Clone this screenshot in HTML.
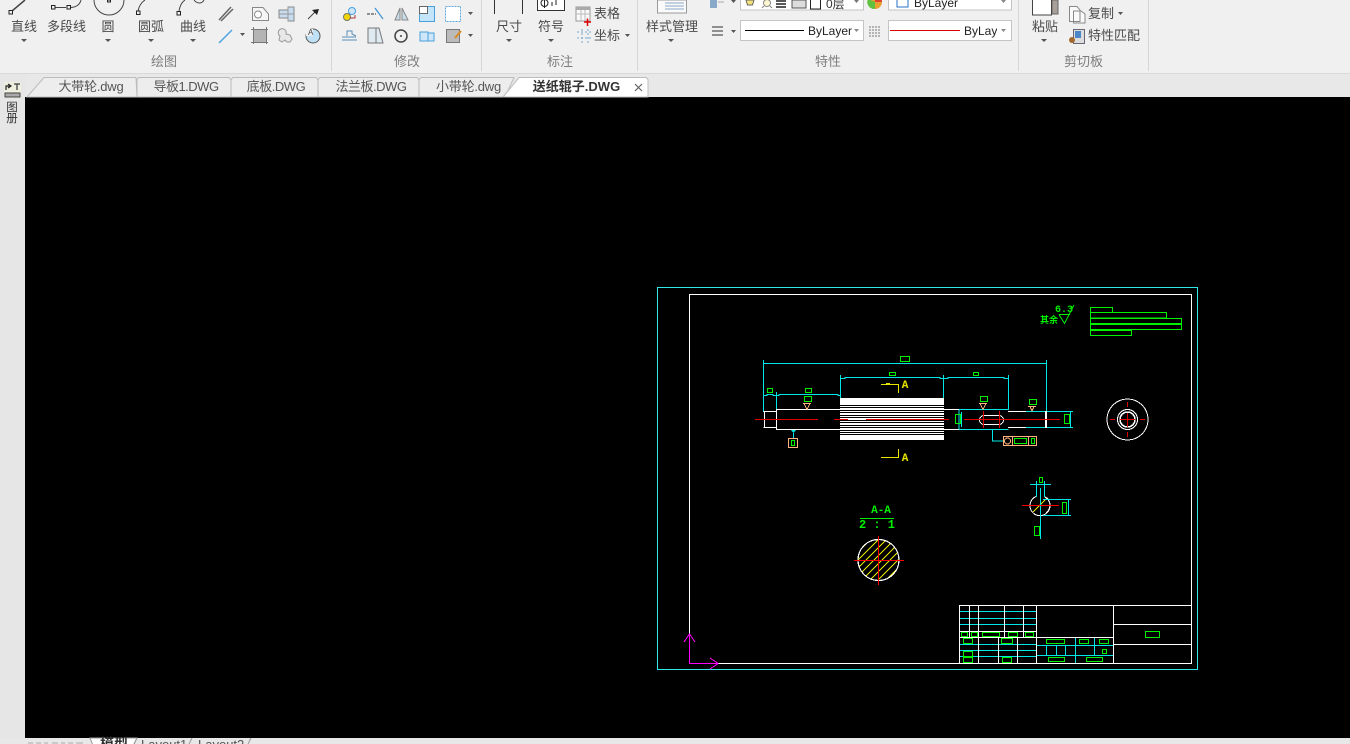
<!DOCTYPE html>
<html><head><meta charset="utf-8"><style>
html,body{margin:0;padding:0;background:#000;width:1350px;height:744px;overflow:hidden}
svg{display:block;position:absolute;left:0;top:0}
.t{font-family:"Liberation Sans","Noto Sans CJK SC",sans-serif;font-size:13px;fill:#4a4a4a}
.g{font-family:"Liberation Sans","Noto Sans CJK SC",sans-serif;font-size:13px;fill:#7d7d7d;text-anchor:middle}
.tab{font-family:"Liberation Sans","Noto Sans CJK SC",sans-serif;font-size:13px;fill:#555;text-anchor:middle}
.nar{letter-spacing:-.5px}
.c{font-family:"Liberation Sans",sans-serif;font-size:12px;fill:#222}
.ar{fill:#555}
.i{fill:none;stroke:#666;stroke-width:1}
.d{fill:none;shape-rendering:crispEdges;stroke-width:1}
.dt{font-family:"Liberation Mono",monospace;font-size:11px;font-weight:bold;text-anchor:middle}
</style></head><body>
<svg width="1350" height="744" viewBox="0 0 1350 744" xmlns="http://www.w3.org/2000/svg">
<!-- backgrounds -->
<rect width="1350" height="744" fill="#000"/>
<rect width="1350" height="74" fill="#f0f0f0"/>
<rect y="73" width="1350" height="1" fill="#d9d9d9"/>
<rect y="74" width="1350" height="23" fill="#e8e8e8"/>
<rect y="74" width="25" height="670" fill="#e6e6e6"/>
<rect y="738" width="1350" height="6" fill="#e8e8e8"/>
<!-- separators -->
<g fill="#d6d6d6"><rect x="331" y="0" width="1" height="71"/><rect x="481" y="0" width="1" height="71"/><rect x="637" y="0" width="1" height="71"/><rect x="1018" y="0" width="1" height="71"/><rect x="1148" y="0" width="1" height="71"/></g>

<!-- draw group big icons -->
<g class="i" fill="none">
<path d="M12 11L25 0" stroke="#444" stroke-width="1.5"/><rect x="9" y="10.5" width="3.5" height="3.5" stroke="#222"/>
<path d="M55 7.5H66M71 7.5C77 7 80 4 81 0" stroke="#444"/><rect x="51.5" y="5.5" width="3.5" height="3.5" stroke="#222"/><rect x="67" y="5.5" width="3.5" height="3.5" stroke="#222"/>
<circle cx="109" cy="0" r="15" stroke="#444"/><rect x="107.5" y="0" width="3" height="2" stroke="#222"/>
<path d="M138 11C139 6 142 2 145 0" stroke="#444"/><rect x="136.5" y="11" width="3.5" height="3.5" stroke="#222"/>
<path d="M179 11C180 5 182 2 185 0M194 0C197 4 202 4 204 0" stroke="#444"/><rect x="177" y="11.5" width="3.5" height="3.5" stroke="#222"/>
</g>
<g class="t">
<text x="11" y="31">直线</text><text x="47" y="31">多段线</text><text x="101.500" y="31">圆</text><text x="138" y="31">圆弧</text><text x="180" y="31">曲线</text>
<text x="496" y="31">尺寸</text><text x="538" y="31">符号</text><text x="594" y="18">表格</text><text x="594" y="40">坐标</text>
<text x="646" y="31">样式管理</text><text x="1032" y="31">粘贴</text><text x="1088" y="18">复制</text><text x="1088" y="40">特性匹配</text>
</g>
<g class="ar">
<path d="M21 39h6l-3 3zM105 39h6l-3 3zM148 39h6l-3 3zM190 39h6l-3 3zM506 39h6l-3 3zM548 39h6l-3 3zM668 39h6l-3 3zM1041 39h6l-3 3z"/>
<path d="M240 33h5l-2.500 3zM468 12h5l-2.500 3zM468 34h5l-2.500 3zM625 34h5l-2.500 3zM731 30h5l-2.500 3zM1118 12h5l-2.500 3zM731 0h5l-2.500 3z"/>
</g>
<g class="g"><text x="164" y="66">绘图</text><text x="407" y="66">修改</text><text x="560" y="66">标注</text><text x="828" y="66">特性</text><text x="1083.500" y="66">剪切板</text></g>

<!-- draw small icons -->
<path d="M219 20L231 7M221 21L233 9" stroke="#666" stroke-width="1.500" fill="none"/>
<path d="M219 43L232 30" stroke="#4da6e0" stroke-width="1.500"/>
<path d="M252.500 7.500H263L268.500 14V20.500H252.500Z" fill="#f5f5f5" stroke="#888"/><circle cx="258" cy="14.500" r="3.500" fill="#fff" stroke="#888"/>
<rect x="253.500" y="29.500" width="13" height="13" fill="#b4b4b4" stroke="#777"/>
<path d="M251 29.500H269M251 42.500H269M253.500 27V45M266.500 27V45" stroke="#777" stroke-dasharray="2 1"/>
<path d="M279 10H288V7H294V21H288V18H279Z" fill="#c8dcf0" stroke="#888"/>
<path d="M288 7V21M279 14H294" stroke="#999"/>
<path d="M280 36a4 4 0 1 1 6 -2l4 1 2 4-2 3-3 0-2 -2-3 2-3-2z" fill="#e8e8e8" stroke="#999"/>
<path d="M308 19L316 11" stroke="#444"/><path d="M312 10L319 9L317 15Z" fill="#222"/>
<circle cx="313" cy="36" r="7" fill="#bfe0f6" stroke="#555"/><path d="M313 36V29H306V36Z" fill="#f0f0f0"/><text x="308" y="35" font-family="Liberation Sans,sans-serif" font-size="8" fill="#444">A</text>
<!-- modify icons -->
<circle cx="347" cy="17" r="3.500" fill="#f0d800" stroke="#776"/><circle cx="352" cy="11" r="3.500" fill="#cfe6f8" stroke="#4aa0dc"/><path d="M350 18h5v-3" stroke="#a33" fill="none"/>
<path d="M367 14H376" stroke="#555" stroke-width="1.200" stroke-dasharray="3 1"/><path d="M375 8L383 19" stroke="#3a90d0" stroke-width="1.200"/>
<path d="M400 8V20H395ZM402 8V20H408Z" fill="#c8dcea" stroke="#888"/>
<rect x="419.500" y="6.500" width="15" height="15" fill="#c4e4fa" stroke="#4aa0dc"/><rect x="419.500" y="6.500" width="8" height="7" fill="#fff" stroke="#666"/>
<rect x="445.500" y="6.500" width="15" height="15" fill="#fff" stroke="#5aa8dc" stroke-dasharray="2 1"/>
<path d="M342 37H356M342 40H357M347 36V31H352L352 34L356 36" fill="none" stroke="#5a8fb8"/>
<path d="M368 28H376V43H368ZM376 28H379L383 43H376Z" fill="#dfe9f0" stroke="#777"/>
<circle cx="401" cy="36" r="6" fill="none" stroke="#444" stroke-width="1.500"/><circle cx="401" cy="36" r="1" fill="#444"/>
<path d="M420 32H428V41H420ZM428 33H434V41H428Z" fill="#cfe6f8" stroke="#4aa0dc"/>
<rect x="446.500" y="29.500" width="13" height="13" fill="#bbb" stroke="#777"/><path d="M455 38L461 31" stroke="#d88a20" stroke-width="2"/>
<!-- annotation icons -->
<path d="M494.500 0V14M522.500 0V14" stroke="#333"/>
<path d="M537.500 0V10.500H564.500V0" fill="#fff" stroke="#333"/><circle cx="544.500" cy="3" r="3.500" fill="none" stroke="#222"/><path d="M544.500 0V8M552 2V6M556 0V5" stroke="#222"/>
<rect x="576" y="7" width="14" height="14" fill="#fafafa" stroke="#999"/><rect x="576" y="7" width="14" height="3" fill="#aaa"/><path d="M576 14H590M581 10V21M585 10V21" stroke="#bbb"/><path d="M584 22H591M587.500 18.500V26" stroke="#d00" stroke-width="1.500"/>
<path d="M577 32h14M577 38h14M582 29v14M588 29v14" stroke="#77a8d0" stroke-dasharray="2 2"/>
<!-- style mgr -->
<rect x="657.500" y="0" width="29" height="13" fill="#fafafa" stroke="#999"/><path d="M665 3H684M665 6H684M665 9H684" stroke="#8aa8c8"/>
<!-- properties -->
<rect x="710" y="0" width="7" height="8" fill="#8aa8c8"/><path d="M718 2H724" stroke="#aaa"/>
<rect x="740.500" y="-4" width="123" height="14" fill="#fff" stroke="#c4c4c4"/>
<path d="M746 0h8l-1.500 5h-5z" fill="#f6e27a" stroke="#666"/><circle cx="767" cy="3" r="3.500" fill="#fff8d0" stroke="#888"/><path d="M762 8l2-2M772 8l-2-2" stroke="#888"/>
<path d="M776 1H786M776 4H786M776 7H786" stroke="#222" stroke-width="1.500"/>
<rect x="792" y="0" width="14" height="8" fill="#ddd" stroke="#555"/>
<rect x="810.500" y="-3" width="10" height="12" fill="#fff" stroke="#222"/>
<text x="826" y="8" font-family="Liberation Sans,'Noto Sans CJK SC',sans-serif" font-size="12" fill="#333">0层</text>
<path d="M854 0h5l-2.500 3z" fill="#777"/>
<circle cx="875" cy="2" r="7" fill="#e8a030"/><path d="M875 2L868 -1A7 7 0 0 0 875 9Z" fill="#60c040"/><path d="M875 2V-5A7 7 0 0 1 882 2Z" fill="#e04030"/>
<rect x="888.500" y="-4" width="123" height="14" fill="#fff" stroke="#c4c4c4"/><rect x="897" y="-3" width="11" height="10" fill="#fff" stroke="#2a70c8"/>
<text x="914" y="7" class="c">ByLayer</text><path d="M1001 0h5l-2.500 3z" fill="#888"/>
<path d="M712 27H723M712 31H723M712 35H723" stroke="#555" stroke-width="1.200"/>
<rect x="740.500" y="20.500" width="123" height="20" fill="#fff" stroke="#c4c4c4"/><path d="M745 30.500H804" stroke="#000"/>
<text x="808" y="35" class="c">ByLayer</text><path d="M854 29h5l-2.500 3z" fill="#888"/>
<path d="M869 27H881M869 30H881M869 33H881M869 36H881" stroke="#777" stroke-dasharray="2 1"/>
<rect x="888.500" y="20.500" width="123" height="20" fill="#fff" stroke="#c4c4c4"/><path d="M890 30.500H960" stroke="#d00"/>
<svg x="964" y="20" width="33" height="20"><text x="0" y="15" class="c">ByLayer</text></svg><path d="M1001 29h5l-2.500 3z" fill="#888"/>
<!-- clipboard -->
<rect x="1052" y="0" width="6" height="14" fill="#a8a098" stroke="#666"/><rect x="1032.500" y="-1" width="19" height="16" fill="#fff" stroke="#444"/>
<path d="M1069.500 6.500H1077L1080 10V21.500H1069.500Z M1073.500 11H1081L1085 14V23H1073.500Z" fill="#fafafa" stroke="#888"/>
<rect x="1073.500" y="29.500" width="11" height="14" fill="#ddd" stroke="#667"/><rect x="1075" y="31" width="6" height="7" fill="#4a86c8"/><circle cx="1072" cy="40" r="3" fill="#a06a30"/>

<!-- document tabs -->
<g fill="#ededed" stroke="#bcbcbc">
<path d="M27 97L44 77.500H136L137 97Z"/>
<path d="M137 97V79.500L139 77.500H229L231 80V97Z"/>
<path d="M231 97V79.500L233 77.500H316L318 80V97Z"/>
<path d="M318 97V79.500L320 77.500H417L419 80V97Z"/>
<path d="M419 97V79.500L421 77.500H514L505 97Z"/>
</g>
<path d="M503 97L519 77.500H646L648 79.500V97Z" fill="#fff" stroke="#bcbcbc"/>
<g class="tab">
<text x="91" y="91" class="nar" style="letter-spacing:-.2px">大带轮.dwg</text><text x="186" y="91" class="nar">导板1.DWG</text><text x="276" y="91" class="nar">底板.DWG</text><text x="371" y="91" class="nar">法兰板.DWG</text><text x="468.500" y="91" style="letter-spacing:-.2px">小带轮.dwg</text>
<text x="576.500" y="91" font-weight="bold" fill="#333">送纸辊子.DWG</text>
</g>
<path d="M635 84L642 91M642 84L635 91" stroke="#666" stroke-width="1.200"/>

<!-- side panel -->
<rect x="4" y="82" width="17" height="16" fill="#efefdf"/>
<path d="M6 90V86H10M8 84L11 86L8 88" fill="none" stroke="#222" stroke-width="1.200"/><path d="M14 84H20M17 84V90" stroke="#555" stroke-width="1.500"/>
<rect x="5" y="93" width="15" height="4" fill="#aaa" stroke="#444"/>
<text x="12" y="111" class="tab" style="font-size:11.500px;fill:#333">图</text>
<text x="12" y="122" class="tab" style="font-size:11.500px;fill:#333">册</text>

<!-- layout tabs -->
<path d="M28 743h5M36 743h5M44 743h4M52 743h6M61 743h4M68 743h5M76 743h7" stroke="#aaa"/>
<path d="M90 738H137L132 748H94Z" fill="#fff" stroke="#999"/>
<text x="114" y="749" font-family="Liberation Sans,'Noto Sans CJK SC',sans-serif" font-size="14" font-weight="bold" fill="#333" text-anchor="middle">模型</text>
<path d="M137 738L134 744M192 738L189 744M251 738L248 744" stroke="#999"/>
<text x="141" y="749" font-family="Liberation Sans,sans-serif" font-size="13" fill="#555">Layout1</text>
<text x="198" y="749" font-family="Liberation Sans,sans-serif" font-size="13" fill="#555">Layout2</text>

<!-- CAD drawing -->
<rect x="657.500" y="287.500" width="540" height="382" fill="none" stroke="#2fe8e8" shape-rendering="crispEdges"/>
<path class="d" stroke="#fff" d="M689.500 634V294.500H1191.500V663.500H718"/>
<!-- UCS -->
<path d="M689.500 634V663.500H718M684 642L689.500 634L695 642M710 658L718 663.500L710 669" fill="none" stroke="#ff00ff" stroke-width="1" shape-rendering="crispEdges"/>

<!-- top right -->
<g class="d" stroke="#00f000">
<rect x="1090.500" y="307.500" width="22" height="5"/><rect x="1090.500" y="312.500" width="76" height="5.500"/><rect x="1090.500" y="318.500" width="91" height="5"/><rect x="1090.500" y="324.500" width="91" height="5"/><rect x="1090.500" y="330.500" width="41" height="5"/>
</g>
<path d="M1059 314.500H1070M1059 314.500L1064.500 323.500L1074 305" fill="none" stroke="#00f000"/>
<text x="1064" y="312" class="dt" fill="#00f000" style="font-size:10px">6.3</text>
<text x="1049" y="323" font-family="'Noto Sans CJK SC',sans-serif" font-size="9" font-weight="bold" fill="#00f000" text-anchor="middle">其余</text>

<!-- shaft dims -->
<g class="d" stroke="#00e6e6">
<path d="M763.500 360V412M1046.500 360V412M763.500 363.500H1046.500"/>
<path d="M840.500 375V398M943.500 375V398M1008.500 375V410M840.500 378.500L845 378.500V377.500H940V378.500H943.500H948V377.500H1004V378.500H1008.500"/>
<path d="M776.500 392V410M763.500 395.500H767V394.500H773V395.500H779V394.500H838V395.500H840.500"/>
<path d="M959 409.500H1008.500M959 429.500H1008.500M961.500 412V427M959 429V410M1026 411.500H1073M1026 427.500H1073M1070.500 411V428"/>
<path d="M793.500 433V438M992.500 429V441H1003"/>
</g>
<path d="M790 429H797L793.500 433Z" fill="#00e6e6"/>
<g class="d" stroke="#00f000">
<rect x="900.500" y="356.500" width="9" height="5"/><rect x="889.500" y="372.500" width="6" height="3"/><rect x="973.500" y="372.500" width="5" height="3"/>
<rect x="767.500" y="388.500" width="5" height="4"/><rect x="805.500" y="388.500" width="6" height="4"/>
<rect x="804.500" y="396.500" width="7" height="5"/><rect x="980.500" y="396.500" width="7" height="5"/><rect x="1029.500" y="399.500" width="7" height="5"/>
<rect x="955.500" y="414.500" width="5" height="9"/><rect x="1064.500" y="414.500" width="5" height="9"/>
<rect x="791.500" y="440.500" width="3" height="5"/><rect x="1014.500" y="438.500" width="12" height="5"/><rect x="1031.500" y="438.500" width="3" height="5"/>
</g>
<!-- shaft -->
<g class="d" stroke="#fff">
<path d="M776 409.500H840M776 429.500H840M763.500 411.500H776M763.500 427.500H776M764.500 411V428M776.500 409V430"/>
<path d="M944 409.500H959M944 429.500H959M1008 411.500H1026M1008 427.500H1026"/>
<path d="M1045.500 411V428M1046.500 411V428"/>
</g>
<rect x="840" y="398" width="104" height="42" fill="#fff"/>
<g fill="#000" shape-rendering="crispEdges">
<rect x="840" y="405" width="104" height="1"/><rect x="840" y="407" width="104" height="1"/><rect x="840" y="410" width="104" height="1"/><rect x="840" y="412" width="104" height="1"/><rect x="840" y="415" width="104" height="1"/><rect x="840" y="417" width="104" height="1"/><rect x="840" y="420" width="104" height="1"/><rect x="840" y="422" width="104" height="1"/><rect x="840" y="425" width="104" height="1"/><rect x="840" y="427" width="104" height="1"/><rect x="840" y="430" width="104" height="1"/><rect x="840" y="432" width="104" height="1"/><rect x="840" y="434" width="104" height="1"/>
</g>
<rect x="979.500" y="415.500" width="24" height="9" rx="4.500" fill="none" stroke="#fff" shape-rendering="crispEdges"/>
<g class="d" stroke="#e00000">
<path d="M755 419.500H818M834 419.500H848M866 419.500H949M964 419.500H1060M983.500 411V428M999.500 411V428"/>
</g>
<!-- yellow section marks -->
<path class="d" stroke="#e6e600" d="M881 384.500H898.500V393M881 457.500H898.500V449"/>
<rect x="886" y="383" width="4" height="2" fill="#e6e600"/>
<text x="905" y="388" class="dt" fill="#e6e600">A</text>
<text x="905" y="461" class="dt" fill="#e6e600">A</text>
<!-- roughness triangles -->
<path d="M803 403.500H811M804 403.500L807 409.500L810 403.500M979 403.500H987M980 403.500L983 409.500L986 403.500M1028 406.500H1036M1030 406.500L1032 411L1034 406.500" fill="none" stroke="#ffb27a" shape-rendering="crispEdges"/>
<g class="d" stroke="#ffb27a">
<rect x="788.500" y="438.500" width="9" height="9"/><rect x="1003.500" y="436.500" width="33" height="9"/><path d="M1012.500 437V445M1028.500 437V445"/>
</g>
<circle cx="1007.500" cy="441" r="3" fill="none" stroke="#ffb27a" shape-rendering="crispEdges"/>
<!-- end view -->
<circle cx="1127.500" cy="419.500" r="20.500" fill="none" stroke="#fff" shape-rendering="crispEdges"/>
<circle cx="1127.500" cy="419.500" r="10" fill="none" stroke="#fff" shape-rendering="crispEdges"/><circle cx="1127.500" cy="419.500" r="7.500" fill="none" stroke="#fff" stroke-width="1.500" shape-rendering="crispEdges"/>
<path class="d" stroke="#e00000" d="M1127.500 402V407M1127.500 413V427M1127.500 432V437M1110 419.500H1115M1120 419.500H1135M1140 419.500H1145"/>
<!-- section A-A -->
<text x="881" y="513" class="dt" fill="#00f000">A-A</text>
<path class="d" stroke="#00f000" d="M860 518.500H894"/>
<text x="877" y="528" class="dt" fill="#00f000" style="font-size:12px">2 : 1</text>
<defs><clipPath id="cp"><circle cx="878.500" cy="560" r="20.500"/></clipPath><clipPath id="cq"><circle cx="1040" cy="505" r="10"/></clipPath></defs>
<g clip-path="url(#cp)" stroke="#e6e600" fill="none" shape-rendering="crispEdges">
<path d="M850 568L880 538M850 576L888 538M850 584L896 538M858 584L904 538M866 584L904 546M874 584L904 554M882 584L904 562M850 560L872 538M850 552L864 538"/>
</g>
<circle cx="878.500" cy="560" r="20.500" fill="none" stroke="#fff" stroke-width="1.200" shape-rendering="crispEdges"/>
<path class="d" stroke="#ff0000" d="M878.500 536V585M854 560.500H904"/>
<!-- small section -->
<path d="M1033 512L1047 498" stroke="#e6e600" clip-path="url(#cq)" shape-rendering="crispEdges"/>
<path d="M1036 496.500A10 10 0 1 0 1044 496.500M1047 498A10 10 0 0 1 1046 513" fill="none" stroke="#fff" shape-rendering="crispEdges"/>
<path class="d" stroke="#00e6e6" d="M1030 484.500H1051M1036.500 481V497M1044.500 481V497M1040.500 488V539M1043 499.500H1071M1043 515.500H1071M1068.500 499V516"/>
<path class="d" stroke="#ff0000" d="M1022 505.500H1059"/>
<g class="d" stroke="#00f000"><rect x="1039.500" y="477.500" width="3" height="5"/><rect x="1062.500" y="502.500" width="4" height="11"/><rect x="1034.500" y="526.500" width="5" height="9"/></g>

<!-- title block -->
<g class="d" stroke="#00e6e6">
<path d="M960 611.500H1036M960 618.500H1036M960 624.500H1036M960 644.500H1036M960 650.500H1036M960 656.500H1036M1037 645.500H1113M1037 655.500H1113M1075.500 637V663M1094.500 637V655M1046.500 645V655M1056.500 645V655M1065.500 645V655"/>
</g>
<g class="d" stroke="#fff">
<path d="M959.500 605V663M969.500 605V637M978.500 605V663M1004.500 605V637M1023.500 605V637M1036.500 605V663M1113.500 605V663M998.500 637V663M1017.500 637V663"/>
<path d="M959 605.500H1191M959 631.500H1036M959 637.500H1113M1113 624.500H1191M1113 644.500H1191"/>
</g>
<g class="d" stroke="#00f000">
<rect x="961.500" y="632.500" width="6" height="4"/><rect x="971.500" y="632.500" width="6" height="4"/><rect x="982.500" y="632.500" width="17" height="4"/><rect x="1008.500" y="632.500" width="9" height="4"/><rect x="1025.500" y="632.500" width="8" height="4"/>
<rect x="963.500" y="638.500" width="9" height="5"/><rect x="1001.500" y="638.500" width="11" height="5"/><rect x="1046.500" y="639.500" width="18" height="4"/><rect x="1079.500" y="639.500" width="9" height="4"/><rect x="1099.500" y="639.500" width="9" height="4"/>
<rect x="963.500" y="651.500" width="9" height="5"/><rect x="963.500" y="657.500" width="9" height="5"/><rect x="1002.500" y="657.500" width="9" height="5"/><rect x="1048.500" y="657.500" width="16" height="4"/><rect x="1086.500" y="657.500" width="16" height="4"/><rect x="1102.500" y="649.500" width="4" height="4"/><rect x="1145.500" y="631.500" width="14" height="6"/>
</g>
</svg>
</body></html>
